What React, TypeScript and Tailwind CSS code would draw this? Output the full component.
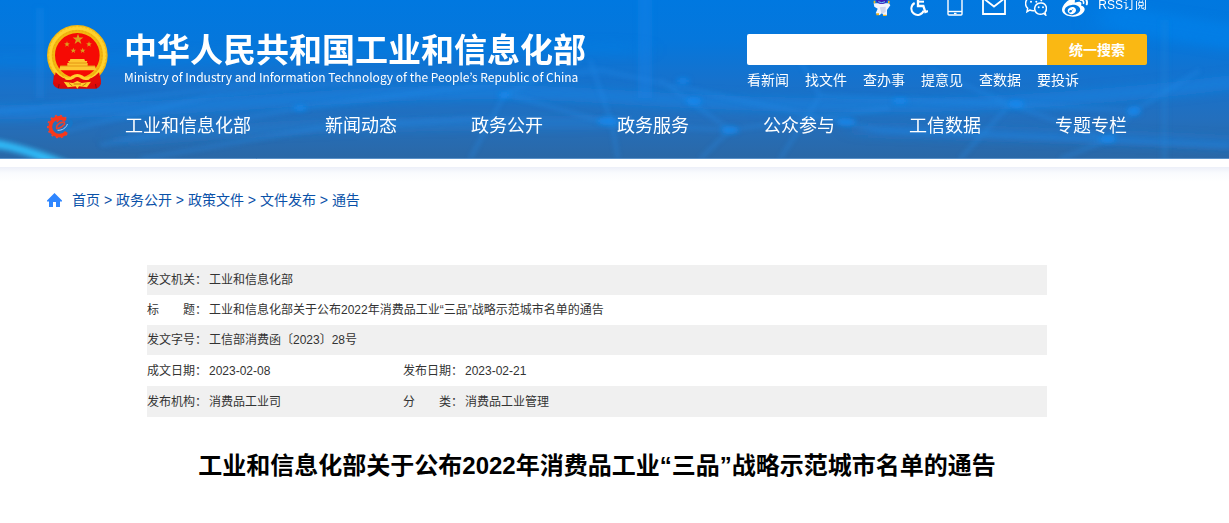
import type { ReactNode } from "react";
import { FaWeibo } from "react-icons/fa";

const quickLinks = ["看新闻", "找文件", "查办事", "提意见", "查数据", "要投诉"];

const navItems = ["工业和信息化部", "新闻动态", "政务公开", "政务服务", "公众参与", "工信数据", "专题专栏"];

const crumbs = ["首页", "政务公开", "政策文件", "文件发布", "通告"];

const title = "工业和信息化部关于公布2022年消费品工业“三品”战略示范城市名单的通告";

type Field = { label: string; value: string };

const rows: Field[][] = [
  [{ label: "发文机关：", value: "工业和信息化部" }],
  [{ label: "标　　题：", value: title }],
  [{ label: "发文字号：", value: "工信部消费函〔2023〕28号" }],
  [
    { label: "成文日期：", value: "2023-02-08" },
    { label: "发布日期：", value: "2023-02-21" },
  ],
  [
    { label: "发布机构：", value: "消费品工业司" },
    { label: "分　　类：", value: "消费品工业管理" },
  ],
];

const STAR = "M0-10 2.4-3.2 9.5-3.1 3.8 1.2 5.9 8.1 0 4-5.9 8.1-3.8 1.2-9.5-3.1-2.4-3.2Z";

function HeaderBackdrop() {
  return (
    <svg
      aria-hidden="true"
      className="absolute inset-0 h-full w-full"
      viewBox="0 0 1229 159"
      preserveAspectRatio="none"
    >
      <defs>
        <filter id="soft" x="-10%" y="-30%" width="120%" height="160%">
          <feGaussianBlur stdDeviation="2.5" />
        </filter>
        <filter id="wide" x="-20%" y="-80%" width="140%" height="260%">
          <feGaussianBlur stdDeviation="12 5" />
        </filter>
      </defs>
      <g filter="url(#wide)" fill="none">
        <path d="M-20 60C200 66 420 40 640 50" stroke="#0a7fe6" strokeWidth="12" opacity=".4" />
        <path d="M-20 112C250 112 380 82 600 96S1000 112 1250 80" stroke="#1587ea" strokeWidth="14" opacity=".5" />
        <path d="M1100 16 1250 40" stroke="#0585f0" strokeWidth="26" opacity=".5" />
        <path d="M120 140C350 120 480 124 640 122" stroke="#1f86e0" strokeWidth="8" opacity=".5" />
        <path d="M860 130C1000 134 1100 136 1250 144" stroke="#1f7fdc" strokeWidth="9" opacity=".6" />
      </g>
      <g filter="url(#soft)" fill="none" stroke="#2590ee" strokeWidth="3" opacity=".4">
        <path d="M100 145 300 108 600 70 880 130 1229 146" />
        <path d="M60 132 210 96 420 74M140 159 320 128 480 118" />
        <path d="M470 159 505 94 580 60M505 94 612 124 730 130 890 108" />
        <path d="M590 60 612 124 618 159M660 80 730 130 700 159" />
        <path d="M1010 104 1134 111 1200 70M1134 111 1108 140 1060 159" />
        <path d="M800 60 820 96 1010 104 1108 140M820 96 780 159M930 70 1010 104 960 159" />
        <path d="M-10 112 120 100 330 74" />
      </g>
      <g filter="url(#soft)">
        <path d="M638 -10h14v108h-14z" fill="#1687ea" opacity=".35" />
        <path d="M1162 20h5v150h-5z" fill="#3088da" opacity=".3" />
        <path d="M36 8h8v90h-8z" fill="#2590ee" opacity=".22" />
        <g fill="#128bf2" opacity=".7">
          <ellipse cx="300" cy="108" rx="7" ry="3" />
          <ellipse cx="504" cy="95" rx="6" ry="3" />
          <ellipse cx="608" cy="121" rx="11" ry="4" />
          <ellipse cx="683" cy="81" rx="7" ry="3" />
          <ellipse cx="694" cy="101" rx="8" ry="4" />
          <ellipse cx="730" cy="130" rx="9" ry="4" />
          <ellipse cx="846" cy="122" rx="10" ry="4" />
          <ellipse cx="900" cy="101" rx="8" ry="3" />
          <ellipse cx="1016" cy="104" rx="8" ry="4" />
          <ellipse cx="1134" cy="111" rx="7" ry="5" />
          <ellipse cx="1108" cy="139" rx="8" ry="4" />
        </g>
        <path d="M-8 139C20 144 46 152 74 164L50 166C30 155 12 150-8 148Z" fill="#30c2ff" opacity=".9" />
      </g>
      <path d="M0 158.500H1229" stroke="#6fa3d6" opacity=".7" />
    </svg>
  );
}

function Emblem() {
  return (
    <svg aria-hidden="true" className="h-16 w-[61px] shrink-0" viewBox="0 0 183 192">
      <path d="M22 134 18 176Q24 190 40 191H146Q158 188 162 176L158 134Z" fill="#d90a0a" />
      <path d="M22 142 40 160 34 190M158 142 142 160 148 190" fill="none" stroke="#8e0d12" strokeWidth="3" />
      <circle cx="91" cy="91" r="79" fill="#f60a04" />
      <circle cx="91" cy="91" r="79" fill="none" stroke="#f3b70f" strokeWidth="24" />
      <circle cx="91" cy="91" r="82" fill="none" stroke="#ffd22e" strokeWidth="10" />
      <circle cx="91" cy="91" r="74" fill="none" stroke="#e3a10e" strokeWidth="2" strokeDasharray="5 5" />
      <circle cx="91" cy="91" r="86" fill="none" stroke="#eeb010" strokeWidth="2" strokeDasharray="5 6" />
      <path d="M26 142C50 166 72 170 91 154C110 170 132 166 156 142L162 170Q91 204 20 170Z" fill="#e10b08" />
      <g fill="#dba01c">
        <path d={STAR} transform="translate(93 43) scale(1.7)" />
        <path d={STAR} transform="translate(60 58) scale(.9)" />
        <path d={STAR} transform="translate(126 58) scale(.9)" />
        <path d={STAR} transform="translate(79 77) scale(.9)" />
        <path d={STAR} transform="translate(107 77) scale(.9)" />
      </g>
      <path
        d="M70 102H112L114 108H121L119 114H122V122H144L148 136H36L40 122H61V114H66L63 108H68Z"
        fill="#fdc631"
      />
      <path d="M66 114H119M40 123H144" stroke="#d97d07" strokeWidth="2" />
      <path
        d="M50 153Q68 162 74 152Q91 142 108 152Q114 162 132 153L126 164Q108 168 102 160Q91 152 80 160Q74 168 56 164Z"
        fill="#ffd12c"
      />
      <path d="M91 168 104 174 132 170 120 187 96 184 91 191 86 184 62 187 50 170 78 174Z" fill="#ffcf2a" />
      <path d="M80 177H102M76 183 66 175M106 183 118 175" stroke="#c9780a" strokeWidth="3" />
    </svg>
  );
}

function GearLogo() {
  return (
    <svg aria-hidden="true" className="h-[25px] w-7" viewBox="4 0 85 75" fill="none">
      <path
        d="M62 13A33 33 0 1 0 64 60"
        stroke="#e8443a"
        strokeWidth="6"
        pathLength="100"
        strokeDasharray="4 5.600"
      />
      <path d="M60 19A27 27 0 1 0 63 54" stroke="#f8381a" strokeWidth="11" />
      <path d="M60 19C50 12 40 14 34 24" stroke="#f8381a" strokeWidth="6" />
      <path d="M34 46C30 34 42 24 54 24C62 26 56 38 36 44" stroke="#e9412f" strokeWidth="5" />
      <path d="M36 49C50 50 62 42 66 30" stroke="#b4d6f7" strokeWidth="3" />
      <path d="M70 15C84 16 88 30 74 41C66 48 56 53 44 54C62 46 76 32 70 15Z" fill="#1676c8" />
    </svg>
  );
}

function Mascot() {
  return (
    <svg aria-hidden="true" className="h-6 w-[18px]" viewBox="0 0 54 72">
      <path d="M14 34 2 34 4 44 14 50 8 64 20 70 27 62 32 72 42 70 42 54 52 40 48 34 38 34Z" fill="#f1f5ff" />
      <path d="M20 46 26 66 38 60 38 44Z" fill="#cdd8f0" />
      <circle cx="26" cy="14" r="20" fill="#8a84e8" />
      <path d="M6 18Q26 12 46 18Q42 36 26 36Q10 36 6 18Z" fill="#3b22b8" />
      <path d="M16 29Q26 35 36 29" fill="none" stroke="#6fd0ff" strokeWidth="3" />
      <path d="M2 26h5v8H2zM45 26h5v8h-5zM10 64h8v6h-8zM30 68h10v4H30z" fill="#f5b51c" />
    </svg>
  );
}

function AccessIcon() {
  return (
    <svg aria-hidden="true" className="h-6 w-[18px]" viewBox="0 0 54 72" fill="none" stroke="#fff" strokeWidth="7">
      <circle cx="23" cy="6" r="5" fill="#fff" stroke="none" />
      <path d="M24 12V42H40L46 60L54 57" />
      <path d="M24 29H42" strokeWidth="6" />
      <path d="M14 33A19 19 0 1 0 41 56" strokeWidth="6" />
    </svg>
  );
}

function PhoneIcon() {
  return (
    <svg aria-hidden="true" className="h-6 w-4" viewBox="0 0 16 24" fill="none" stroke="#fff" strokeWidth="1.4">
      <rect x="1" y="1" width="14" height="22" rx="1" />
      <path d="M1 19.500H15" />
      <path d="M7 21.500H9.500" />
    </svg>
  );
}

function MailIcon() {
  return (
    <svg aria-hidden="true" className="h-5 w-6" viewBox="0 0 24 20" fill="none" stroke="#fff" strokeWidth="1.800">
      <path d="M1 1H23V18H1Z" />
      <path d="M1 2 12 10.500 23 2" />
    </svg>
  );
}

function WechatIcon() {
  return (
    <svg aria-hidden="true" className="h-6 w-[22px]" viewBox="0 0 66 72" fill="none" stroke="#fff" strokeWidth="4.500">
      <path d="M28 56Q20 57 14 54L6 59 8 49C0 42 0 30 6 22C18 8 44 10 50 28" />
      <path d="M56 64C44 71 28 64 29 49C31 30 60 26 64 46C65 53 63 58 60 61L62 69Z" />
      <g fill="#fff" stroke="none">
        <circle cx="18" cy="29" r="3" />
        <circle cx="34" cy="29" r="3" />
        <circle cx="41" cy="46" r="3" />
        <circle cx="54" cy="46" r="3" />
      </g>
    </svg>
  );
}

function IconLink({ label, children }: { label: string; children: ReactNode }) {
  return (
    <a href="#" aria-label={label} className="block">
      {children}
    </a>
  );
}

function Header() {
  return (
    <header className="relative bg-[linear-gradient(180deg,#0078e0_0%,#0577dc_25%,#1672cd_50%,#236fbd_75%,#2b68a6_100%)] pb-[9px] pr-[35px] text-white">
      <HeaderBackdrop />
      <div className="relative mx-auto max-w-[1100px]">
        <div className="flex h-4 items-end justify-end gap-[19px]">
          <IconLink label="智能问答"><Mascot /></IconLink>
          <IconLink label="无障碍"><AccessIcon /></IconLink>
          <IconLink label="手机版"><PhoneIcon /></IconLink>
          <IconLink label="邮箱"><MailIcon /></IconLink>
          <IconLink label="微信"><WechatIcon /></IconLink>
          <div className="flex items-end gap-2.5">
            <IconLink label="微博"><FaWeibo size={26} className="-mb-1 -ml-1" /></IconLink>
            <a href="#" className="mb-1 text-xs leading-[14px]">RSS订阅</a>
          </div>
        </div>

        <div className="flex items-start justify-between gap-8 pt-[9px]">
          <a href="#" className="flex items-start gap-4">
            <Emblem />
            <div className="pt-1">
              <p className="font-['Noto_Sans_CJK_SC',sans-serif] text-[33px] font-bold leading-[38px]">
                中华人民共和国工业和信息化部
              </p>
              <p lang="en" className="font-['Noto_Sans_CJK_KR',sans-serif] text-xs leading-5">
                Ministry of Industry and Information Technology of the People’s Republic of China
              </p>
            </div>
          </a>
          <div className="w-[400px] pt-[9px]">
            <form className="flex h-[31px] overflow-hidden rounded-xs" onSubmit={(e) => e.preventDefault()}>
              <input type="search" aria-label="搜索" className="min-w-0 flex-1 bg-white px-3 text-sm text-gray-800 outline-none" />
              <button type="submit" className="w-[100px] bg-[#fab813] text-sm font-bold">
                统一搜索
              </button>
            </form>
            <ul className="mt-[5px] flex gap-4 text-sm leading-5">
              {quickLinks.map((item) => (
                <li key={item}><a href="#">{item}</a></li>
              ))}
            </ul>
          </div>
        </div>

        <nav className="mt-3 flex h-12 items-center">
          <a href="#" aria-label="首页" className="w-[78px] shrink-0">
            <GearLogo />
          </a>
          <ul className="flex flex-1 justify-between pr-5 text-lg">
            {navItems.map((item) => (
              <li key={item}><a href="#">{item}</a></li>
            ))}
          </ul>
        </nav>
      </div>
    </header>
  );
}

function Breadcrumb() {
  return (
    <nav aria-label="当前位置" className="flex items-center gap-2.5 text-sm leading-6 text-[#0a51a8]">
      <svg aria-hidden="true" className="h-3.5 w-[15px]" viewBox="0 0 15 14" fill="#2f86ff">
        <path d="M7.500 0 15 7.500V8.500H13V14H9V9H6V14H2V8.500H0V7.500Z" />
      </svg>
      <p>
        {crumbs.map((item, i) => (
          <span key={item}>
            {i > 0 && " > "}
            <a href="#">{item}</a>
          </span>
        ))}
      </p>
    </nav>
  );
}

function DocumentInfo() {
  return (
    <table className="w-full table-fixed text-left text-xs text-[#333]">
      <colgroup>
        <col className="w-[62px]" />
        <col className="w-[194px]" />
        <col className="w-[62px]" />
        <col />
      </colgroup>
      <tbody>
        {rows.map((fields) => (
          <tr key={fields[0].label} className={fields.length > 1 ? "h-[31px] odd:bg-[#f0f0f0]" : "h-[30px] odd:bg-[#f0f0f0]"}>
            {fields.map(({ label, value }) => [
              <th key={label} scope="row" className="whitespace-nowrap font-normal">{label}</th>,
              <td key={value} colSpan={fields.length > 1 ? 1 : 3}>{value}</td>,
            ])}
          </tr>
        ))}
      </tbody>
    </table>
  );
}

export default function App() {
  return (
    <div lang="zh-CN" className="min-h-screen bg-white font-['Liberation_Sans','Noto_Sans_CJK_SC',sans-serif]">
      <Header />
      <div className="mt-2 bg-[linear-gradient(180deg,#eceff8_0px,#f9fbfe_6px,#ffffff_15px)] pr-[35px] pt-[21px]">
        <main className="mx-auto max-w-[1100px]">
          <Breadcrumb />
          <article className="mx-auto max-w-[900px] pt-[53px]">
            <DocumentInfo />
            <h1 className="mt-[33px] text-center text-2xl font-bold text-black">{title}</h1>
          </article>
        </main>
      </div>
    </div>
  );
}
